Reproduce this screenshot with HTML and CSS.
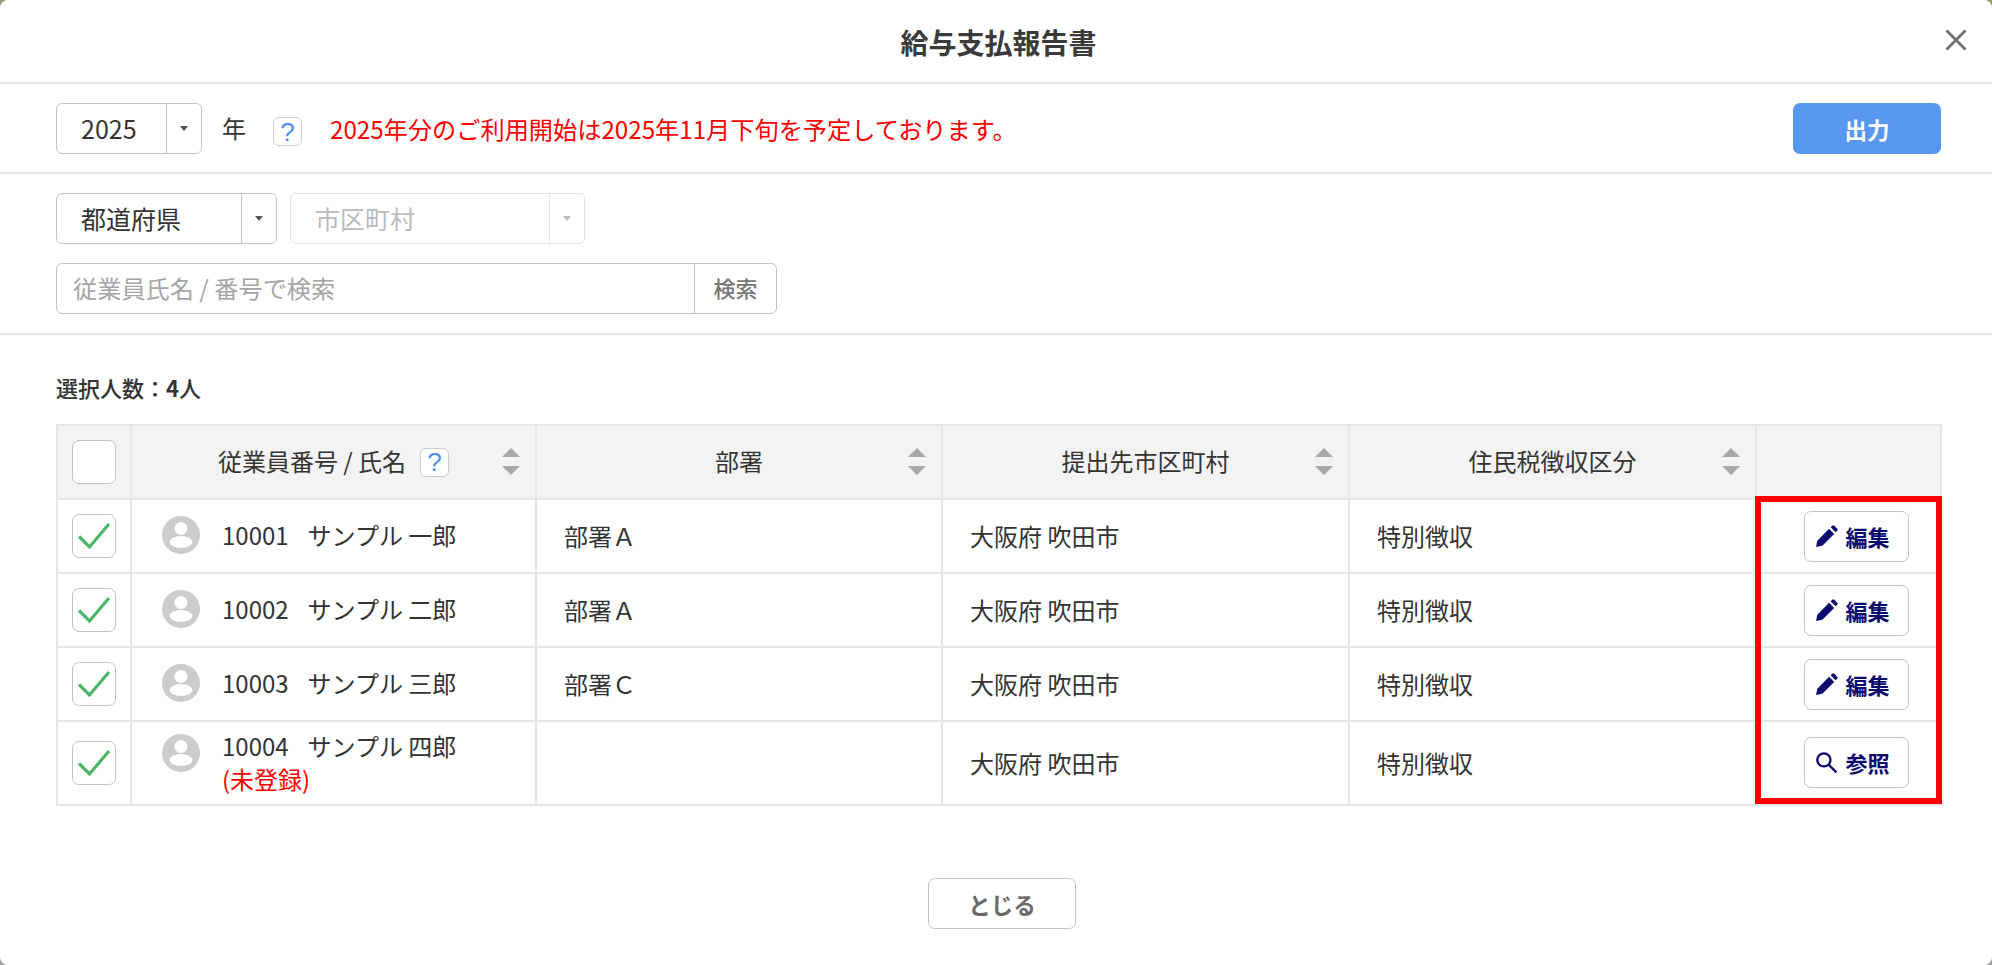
FILE: index.html
```html
<!DOCTYPE html>
<html lang="ja">
<head>
<meta charset="utf-8">
<title>給与支払報告書</title>
<link rel="stylesheet" href="styles.css">
</head>
<body>
<div class="modal">
  <header class="head">
    <h1 class="title">給与支払報告書</h1>
    <button class="close" aria-label="閉じる"><svg width="22" height="22" viewBox="0 0 22 22"><path d="M1.500 1.500l19 19M20.500 1.500l-19 19" stroke="#707070" stroke-width="2.800" fill="none"/></svg></button>
  </header>
  <section class="year-bar">
    <div class="select year"><span class="select-value">2025</span><span class="caret"><i></i></span></div>
    <span class="year-label">年</span>
    <span class="help">?</span>
    <span class="notice">2025年分のご利用開始は2025年11月下旬を予定しております。</span>
    <button class="export">出力</button>
  </section>
  <section class="filters">
    <div class="filter-row">
      <div class="select pref"><span class="select-value">都道府県</span><span class="caret"><i></i></span></div>
      <div class="select city disabled"><span class="select-value">市区町村</span><span class="caret"><i></i></span></div>
    </div>
    <div class="search"><span class="search-input">従業員氏名 / 番号で検索</span><span class="search-btn">検索</span></div>
  </section>
  <section class="content">
    <p class="count">選択人数：<b>4</b>人</p>
    <div class="table-wrap">
      <table class="table">
        <colgroup><col class="c1"><col class="c2"><col class="c3"><col class="c4"><col class="c5"><col class="c6"></colgroup>
        <thead>
          <tr>
            <th><span class="check"></span></th>
            <th class="sortable"><span class="th-in">従業員番号 / 氏名<span class="help small">?</span></span><span class="sort"><i class="up"></i><i class="down"></i></span></th>
            <th class="sortable"><span class="th-in">部署</span><span class="sort"><i class="up"></i><i class="down"></i></span></th>
            <th class="sortable"><span class="th-in">提出先市区町村</span><span class="sort"><i class="up"></i><i class="down"></i></span></th>
            <th class="sortable"><span class="th-in">住民税徴収区分</span><span class="sort"><i class="up"></i><i class="down"></i></span></th>
            <th></th>
          </tr>
        </thead>
        <tbody>
          <tr>
            <td><span class="check on"><svg viewBox="0 0 41 41"><path d="M6 21.500l10.500 10.500L36 9"/></svg></span></td>
            <td class="emp"><div class="emp-in"><svg class="avatar" viewBox="0 0 38 38"><circle cx="19" cy="19" r="19" fill="#ccc"/><circle cx="19" cy="12.500" r="6.500" fill="#fff"/><ellipse cx="19" cy="26" rx="11.500" ry="6" fill="#fff"/></svg><div class="emp-text"><span class="num">10001</span><span>サンプル 一郎</span></div></div></td>
            <td class="pad">部署Ａ</td><td class="pad">大阪府 吹田市</td><td class="pad">特別徴収</td>
            <td class="act"><button class="act-btn"><svg viewBox="0 0 22 22"><path d="M1 21l1.200-6L13.500 3.700l4.800 4.800L7 19.800zM15 2.200l1.500-1.400a1.500 1.500 0 0 1 2 0l2.700 2.700a1.500 1.500 0 0 1 0 2l-1.400 1.500z" fill="#0b0b6f"/></svg>編集</button></td>
          </tr>
          <tr>
            <td><span class="check on"><svg viewBox="0 0 41 41"><path d="M6 21.500l10.500 10.500L36 9"/></svg></span></td>
            <td class="emp"><div class="emp-in"><svg class="avatar" viewBox="0 0 38 38"><circle cx="19" cy="19" r="19" fill="#ccc"/><circle cx="19" cy="12.500" r="6.500" fill="#fff"/><ellipse cx="19" cy="26" rx="11.500" ry="6" fill="#fff"/></svg><div class="emp-text"><span class="num">10002</span><span>サンプル 二郎</span></div></div></td>
            <td class="pad">部署Ａ</td><td class="pad">大阪府 吹田市</td><td class="pad">特別徴収</td>
            <td class="act"><button class="act-btn"><svg viewBox="0 0 22 22"><path d="M1 21l1.200-6L13.500 3.700l4.800 4.800L7 19.800zM15 2.200l1.500-1.400a1.500 1.500 0 0 1 2 0l2.700 2.700a1.500 1.500 0 0 1 0 2l-1.400 1.500z" fill="#0b0b6f"/></svg>編集</button></td>
          </tr>
          <tr>
            <td><span class="check on"><svg viewBox="0 0 41 41"><path d="M6 21.500l10.500 10.500L36 9"/></svg></span></td>
            <td class="emp"><div class="emp-in"><svg class="avatar" viewBox="0 0 38 38"><circle cx="19" cy="19" r="19" fill="#ccc"/><circle cx="19" cy="12.500" r="6.500" fill="#fff"/><ellipse cx="19" cy="26" rx="11.500" ry="6" fill="#fff"/></svg><div class="emp-text"><span class="num">10003</span><span>サンプル 三郎</span></div></div></td>
            <td class="pad">部署Ｃ</td><td class="pad">大阪府 吹田市</td><td class="pad">特別徴収</td>
            <td class="act"><button class="act-btn"><svg viewBox="0 0 22 22"><path d="M1 21l1.200-6L13.500 3.700l4.800 4.800L7 19.800zM15 2.200l1.500-1.400a1.500 1.500 0 0 1 2 0l2.700 2.700a1.500 1.500 0 0 1 0 2l-1.400 1.500z" fill="#0b0b6f"/></svg>編集</button></td>
          </tr>
          <tr class="last">
            <td><span class="check on"><svg viewBox="0 0 41 41"><path d="M6 21.500l10.500 10.500L36 9"/></svg></span></td>
            <td class="emp"><div class="emp-in top"><svg class="avatar" viewBox="0 0 38 38"><circle cx="19" cy="19" r="19" fill="#ccc"/><circle cx="19" cy="12.500" r="6.500" fill="#fff"/><ellipse cx="19" cy="26" rx="11.500" ry="6" fill="#fff"/></svg><div class="emp-text"><div><span class="num">10004</span><span>サンプル 四郎</span></div><div class="unreg">(未登録)</div></div></div></td>
            <td class="pad"></td><td class="pad">大阪府 吹田市</td><td class="pad">特別徴収</td>
            <td class="act"><button class="act-btn"><svg viewBox="0 0 22 22"><circle cx="8.500" cy="8.500" r="6.300" fill="none" stroke="#0b0b6f" stroke-width="2.200"/><path d="M13 13l7.500 7.500" stroke="#0b0b6f" stroke-width="2.200" fill="none"/></svg>参照</button></td>
          </tr>
        </tbody>
      </table>
      <div class="highlight"></div>
    </div>
  </section>
  <footer class="foot"><button class="close-btn">とじる</button></footer>
</div>
</body>
</html>
```

FILE: styles.css
```css
* { box-sizing: border-box; }
html, body { margin: 0; height: 100%; }
body {
  background: linear-gradient(#8f9c70 0 50%, #a0a0a0 50% 100%);
  font-family: "Noto Sans CJK JP", "Noto Sans", sans-serif;
  color: #333;
  font-size: 24px;
  overflow: hidden;
}
button { font-family: inherit; cursor: pointer; padding: 0; }
.modal {
  width: 1992px;
  height: 965px;
  background: #fff;
  border-radius: 8px;
  display: flex;
  flex-direction: column;
}
.head {
  height: 84px;
  flex: none;
  border-bottom: 2px solid #e6e6e6;
  padding: 2px 0 0 5px;
  display: flex;
  align-items: center;
  justify-content: center;
  position: relative;
}
.title { margin: 0; font-size: 28px; font-weight: 700; color: #3a3a3a; line-height: 1; }
.close {
  position: absolute;
  right: 25px;
  top: 29px;
  width: 22px;
  height: 22px;
  border: 0;
  background: none;
  display: flex;
}
.year-bar {
  height: 90px;
  flex: none;
  border-bottom: 2px solid #e6e6e6;
  padding: 19px 51px 0 56px;
  display: flex;
  align-items: flex-start;
}
.select {
  display: flex;
  height: 51px;
  border: 1.500px solid #c4c4c4;
  border-radius: 6px;
  background: #fff;
  align-items: stretch;
  font-size: 25px;
}
.select-value { flex: 1; padding-left: 24px; line-height: 49px; color: #333; }
.caret {
  width: 35px;
  flex: none;
  border-left: 1.500px solid #c4c4c4;
  display: flex;
  align-items: center;
  justify-content: center;
}
.caret i {
  width: 0; height: 0;
  border-left: 4.500px solid transparent;
  border-right: 4.500px solid transparent;
  border-top: 5px solid #555;
}
.year { width: 146px; }
.year-label { margin-left: 20px; line-height: 49px; }
.help {
  display: inline-flex;
  align-items: center;
  justify-content: center;
  width: 29px;
  height: 29px;
  margin: 14px 0 0 27px;
  border: 1.500px solid #ccc;
  border-radius: 6px;
  color: #4f8ff0;
  font-family: "Liberation Sans", sans-serif;
  font-size: 26px;
  line-height: 1;
  background: #fff;
}
.notice { margin-left: 28px; color: #f00; font-size: 24.200px; line-height: 51px; }
.export {
  margin-left: auto;
  width: 148px;
  height: 51px;
  border: 0;
  border-radius: 7px;
  background: #5897f0;
  color: #fff;
  font-size: 22.500px;
  font-weight: 700;
}
.filters {
  height: 161px;
  flex: none;
  border-bottom: 2px solid #e6e6e6;
  padding: 19px 0 0 56px;
  display: flex;
  flex-direction: column;
  gap: 19px;
}
.filter-row { display: flex; gap: 13px; }
.pref { width: 221px; }
.city { width: 295px; border-color: #e4e4e4; }
.city .select-value { color: #bbb; }
.city .caret { border-left-color: #e4e4e4; }
.city .caret i { border-top-color: #bbb; }
.search {
  display: flex;
  width: 721px;
  height: 51px;
  border: 1.500px solid #c4c4c4;
  border-radius: 6px;
}
.search-input { flex: 1; padding-left: 16px; color: #a5a5a5; font-size: 24.200px; line-height: 47px; }
.search-btn {
  width: 82px;
  border-left: 1.500px solid #c4c4c4;
  text-align: center;
  color: #777;
  font-size: 22px;
  font-weight: 500;
  line-height: 47px;
}
.content { padding: 0 51px 0 56px; flex: 1; }
.count { margin: 38px 0 0; font-size: 22px; font-weight: 500; line-height: 28px; color: #333; }
.count b { font-weight: 700; }
.table-wrap { margin-top: 23px; position: relative; }
.table {
  width: 1884px;
  table-layout: fixed;
  border-collapse: collapse;
  font-size: 24px;
}
.c1 { width: 74px; }
.c2 { width: 405px; }
.c3 { width: 406px; }
.c4 { width: 407px; }
.c5 { width: 407px; }
.c6 { width: 185px; }
th, td { border: 2px solid #e6e6e6; padding: 0; }
th {
  height: 74px;
  background: #f3f3f3;
  font-weight: 400;
  font-size: 24px;
  text-align: center;
  position: relative;
}
.sortable { padding-bottom: 3px; }
td { height: 74px; vertical-align: middle; }
.last td { height: 84px; }
.check {
  display: block;
  width: 44px;
  height: 44px;
  margin: 0 auto;
  background: #fff;
  border: 1.500px solid #c4c4c4;
  border-radius: 7px;
}
.check svg { display: block; width: 41px; height: 41px; }
.check path { fill: none; stroke: #4cb768; stroke-width: 3.200; }
.th-in { display: inline-flex; align-items: center; justify-content: center; }
.help.small { margin: 3px 0 0 14px; }
.sort {
  position: absolute;
  right: 14px;
  top: 22px;
  width: 19px;
  display: flex;
  flex-direction: column;
  gap: 9px;
}
.sort i { width: 0; height: 0; border-left: 9.500px solid transparent; border-right: 9.500px solid transparent; }
.sort .up { border-bottom: 9px solid #a8a8a8; }
.sort .down { border-top: 9px solid #a8a8a8; }
.emp { padding: 0 0 3px 30px; }
.last .emp { padding-bottom: 2px; }
.emp-in { display: flex; align-items: center; gap: 22px; }
.emp-in.top { align-items: flex-start; }
.emp-in.top .avatar { margin-top: 5px; }
.avatar { width: 38px; height: 38px; flex: none; }
.emp-text { line-height: 33px; }
.num { margin-right: 19px; }
.unreg { color: #f00; }
.pad { padding: 0 0 2px 27px; color: #333; }
.act { text-align: center; }
.last .act { padding-bottom: 2px; }
.act-btn {
  width: 105px;
  height: 51px;
  margin-left: 15px;
  padding-right: 7px;
  background: #fff;
  border: 1.500px solid #c4c4c4;
  border-radius: 7px;
  color: #0b0b6f;
  font-size: 22px;
  font-weight: 700;
  display: inline-flex;
  align-items: center;
  justify-content: center;
  gap: 7px;
  vertical-align: middle;
}
.act-btn svg { width: 23px; height: 23px; flex: none; }
.highlight {
  position: absolute;
  left: 1699px;
  top: 72px;
  width: 187px;
  height: 308px;
  border: 6px solid #f00;
  pointer-events: none;
}
.foot { height: 87px; flex: none; padding-left: 12px; display: flex; justify-content: center; align-items: flex-start; }
.close-btn {
  width: 148px;
  height: 51px;
  background: #fff;
  border: 1.500px solid #c4c4c4;
  border-radius: 7px;
  color: #6a6a6a;
  font-size: 22.500px;
  font-weight: 700;
}
```
